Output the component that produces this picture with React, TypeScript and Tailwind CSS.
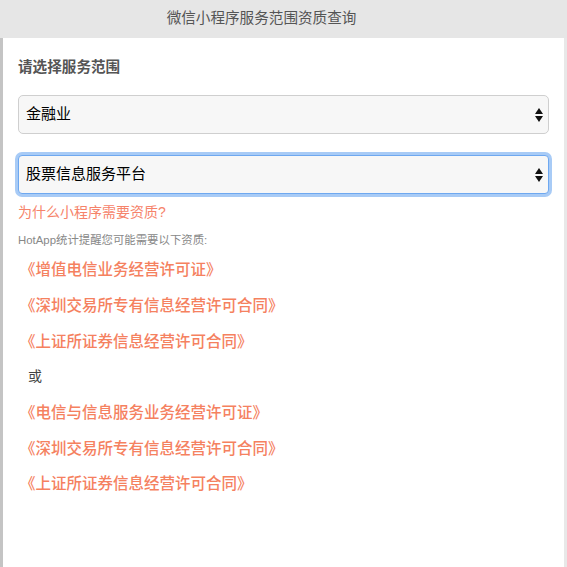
const ITEMS_A = [
  "《增值电信业务经营许可证》",
  "《深圳交易所专有信息经营许可合同》",
  "《上证所证券信息经营许可合同》",
];
const ITEMS_B = [
  "《电信与信息服务业务经营许可证》",
  "《深圳交易所专有信息经营许可合同》",
  "《上证所证券信息经营许可合同》",
];

const FONT = {
  fontFamily:
    '"Liberation Sans", "Noto Sans CJK SC", sans-serif',
};

function Arrows() {
  return (
    <svg width="8" height="14" viewBox="0 0 8 14" className="shrink-0">
      <path d="M4 0 L8 6 L0 6 Z" fill="#111" />
      <path d="M0 8 L8 8 L4 14 Z" fill="#111" />
    </svg>
  );
}

function FakeSelect({ value, focused }: { value: string; focused?: boolean }) {
  return (
    <div
      className={
        focused
          ? "h-[39px] flex items-center justify-between pl-[7px] pr-[5px] rounded-[4px] bg-[#f7f7f7] border border-[#6ea8f0] ring-[3px] ring-[#a8cbf6]"
          : "h-[39px] flex items-center justify-between pl-[7px] pr-[5px] rounded-[5px] bg-[#f7f7f7] border border-[#cfcfcf]"
      }
    >
      <span className="text-[15px] text-black">{value}</span>
      <Arrows />
    </div>
  );
}

export default function App() {
  return (
    <div className="w-[567px] h-[567px] flex flex-col bg-white overflow-hidden" style={FONT}>
      <div className="h-[38px] shrink-0 flex items-center justify-center pr-[44px] bg-[#e6e6e6] text-[14.6px] text-[#555]">
        微信小程序服务范围资质查询
      </div>
      <div className="flex flex-1">
        <div className="w-[3px] bg-[#c4c4c4]" />
        <div className="flex-1 px-[15px]">
          <div className="h-[57px] flex items-center text-[14.6px] font-bold text-[#555] pt-[2px]">
            请选择服务范围
          </div>
          <FakeSelect value="金融业" />
          <div className="h-[21px]" />
          <FakeSelect value="股票信息服务平台" focused />
          <div className="mt-[8px] text-[14px] leading-[20px] text-[#f6836a]">
            为什么小程序需要资质?
          </div>
          <div className="mt-[10px] text-[11.4px] leading-[16px] text-[#888]">
            HotApp统计提醒您可能需要以下资质:
          </div>
          <div className="mt-[4px] flex flex-col pl-[2px]">
            {ITEMS_A.map((t, i) => (
              <div key={"a" + i} className="h-[35.7px] flex items-center text-[15.5px] font-medium text-[#f5815f]">
                {t}
              </div>
            ))}
            <div className="h-[35.7px] flex items-center pl-[8px] text-[14px] text-[#444]">或</div>
            {ITEMS_B.map((t, i) => (
              <div key={"b" + i} className="h-[35.7px] flex items-center text-[15.5px] font-medium text-[#f5815f]">
                {t}
              </div>
            ))}
          </div>
        </div>
        <div className="w-[3px] bg-[#e8e8e8]" />
      </div>
    </div>
  );
}
